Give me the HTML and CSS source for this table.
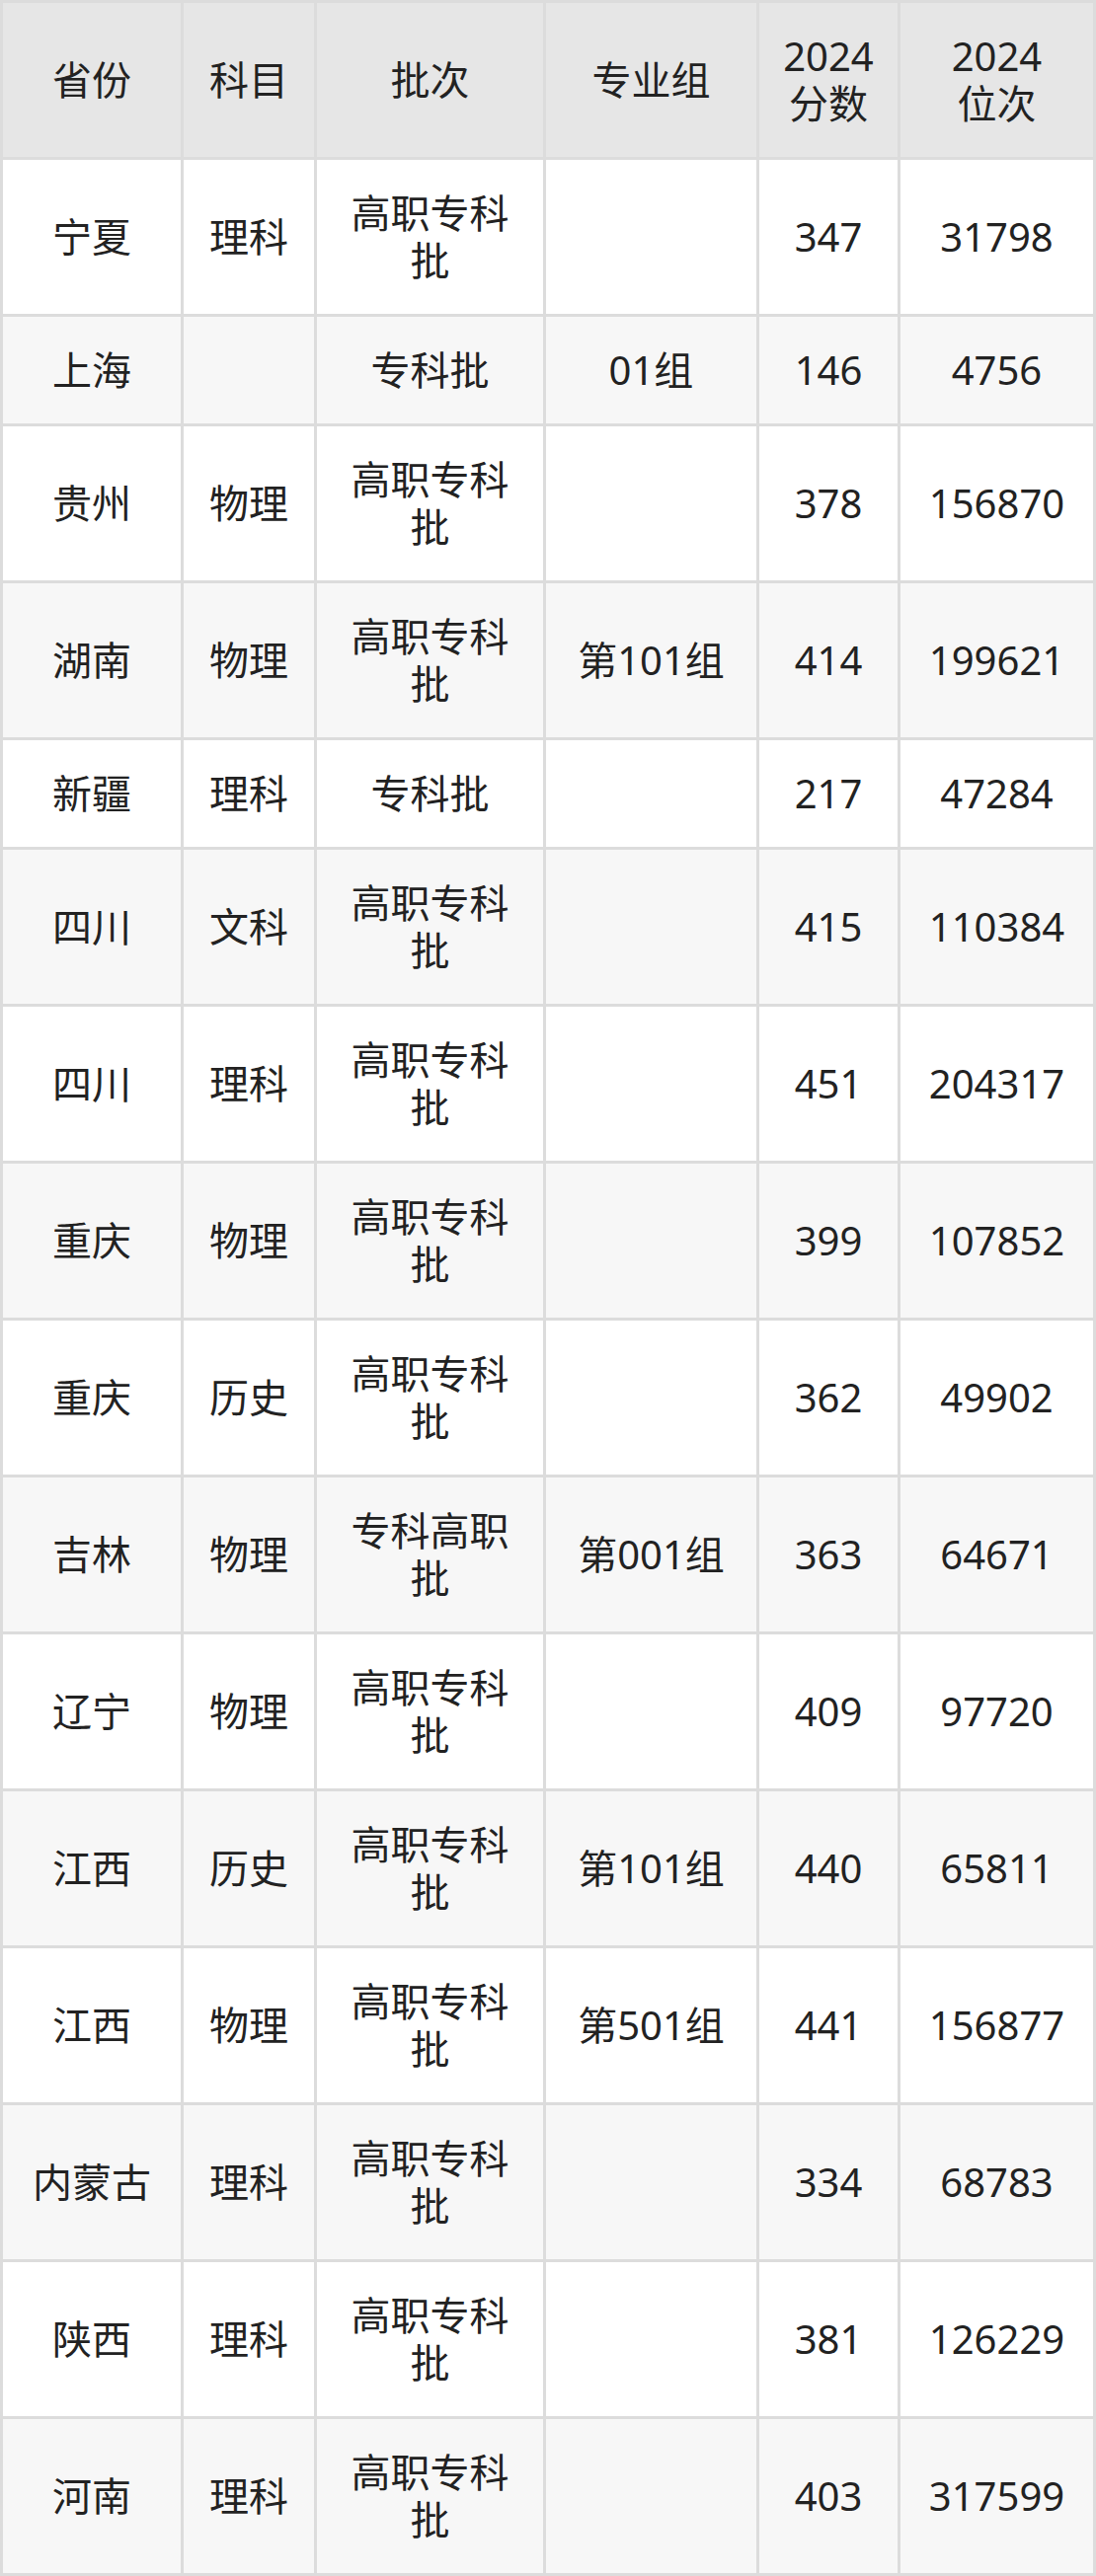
FILE: index.html
```html
<!DOCTYPE html>
<html lang="zh">
<head>
<meta charset="utf-8">
<title>分数位次</title>
<link rel="stylesheet" href="styles.css">
</head>
<body>
<table class="score-table">
  <colgroup>
    <col class="c1"><col class="c2"><col class="c3"><col class="c4"><col class="c5"><col class="c6">
  </colgroup>
  <thead>
    <tr><th>省份</th><th>科目</th><th>批次</th><th>专业组</th><th>2024<br>分数</th><th>2024<br>位次</th></tr>
  </thead>
  <tbody>
    <tr><td>宁夏</td><td>理科</td><td>高职专科批</td><td></td><td>347</td><td>31798</td></tr>
    <tr><td>上海</td><td></td><td>专科批</td><td>01组</td><td>146</td><td>4756</td></tr>
    <tr><td>贵州</td><td>物理</td><td>高职专科批</td><td></td><td>378</td><td>156870</td></tr>
    <tr><td>湖南</td><td>物理</td><td>高职专科批</td><td>第101组</td><td>414</td><td>199621</td></tr>
    <tr><td>新疆</td><td>理科</td><td>专科批</td><td></td><td>217</td><td>47284</td></tr>
    <tr><td>四川</td><td>文科</td><td>高职专科批</td><td></td><td>415</td><td>110384</td></tr>
    <tr><td>四川</td><td>理科</td><td>高职专科批</td><td></td><td>451</td><td>204317</td></tr>
    <tr><td>重庆</td><td>物理</td><td>高职专科批</td><td></td><td>399</td><td>107852</td></tr>
    <tr><td>重庆</td><td>历史</td><td>高职专科批</td><td></td><td>362</td><td>49902</td></tr>
    <tr><td>吉林</td><td>物理</td><td>专科高职批</td><td>第001组</td><td>363</td><td>64671</td></tr>
    <tr><td>辽宁</td><td>物理</td><td>高职专科批</td><td></td><td>409</td><td>97720</td></tr>
    <tr><td>江西</td><td>历史</td><td>高职专科批</td><td>第101组</td><td>440</td><td>65811</td></tr>
    <tr><td>江西</td><td>物理</td><td>高职专科批</td><td>第501组</td><td>441</td><td>156877</td></tr>
    <tr><td>内蒙古</td><td>理科</td><td>高职专科批</td><td></td><td>334</td><td>68783</td></tr>
    <tr><td>陕西</td><td>理科</td><td>高职专科批</td><td></td><td>381</td><td>126229</td></tr>
    <tr><td>河南</td><td>理科</td><td>高职专科批</td><td></td><td>403</td><td>317599</td></tr>
  </tbody>
</table>
</body>
</html>
```
FILE: styles.css
```css
html {
  background: #efefef;
}
body {
  margin: 0;
  background: #efefef;
  font-family: "Noto Sans", "Noto Sans CJK SC", sans-serif;
  color: #222222;
}
.score-table {
  table-layout: fixed;
  width: 1107px;
  border-collapse: separate;
  border-spacing: 0;
  border-top: 3px solid #dcdcdc;
  border-left: 3px solid #dcdcdc;
  background: #ffffff;
}
.c1 { width: 183px; }
.c2 { width: 135px; }
.c3 { width: 232px; }
.c4 { width: 216px; }
.c5 { width: 143px; }
.c6 { width: 198px; }
.score-table th,
.score-table td {
  border-right: 3px solid #dcdcdc;
  border-bottom: 3px solid #dcdcdc;
  padding: 30px 20px;
  font-size: 40px;
  line-height: 48px;
  font-weight: 400;
  text-align: center;
  vertical-align: middle;
}
.score-table th {
  background: #e6e6e6;
  padding-top: 30px;
  padding-bottom: 30px;
}
.score-table tbody tr:nth-child(even) td {
  background: #f7f7f7;
}
```
